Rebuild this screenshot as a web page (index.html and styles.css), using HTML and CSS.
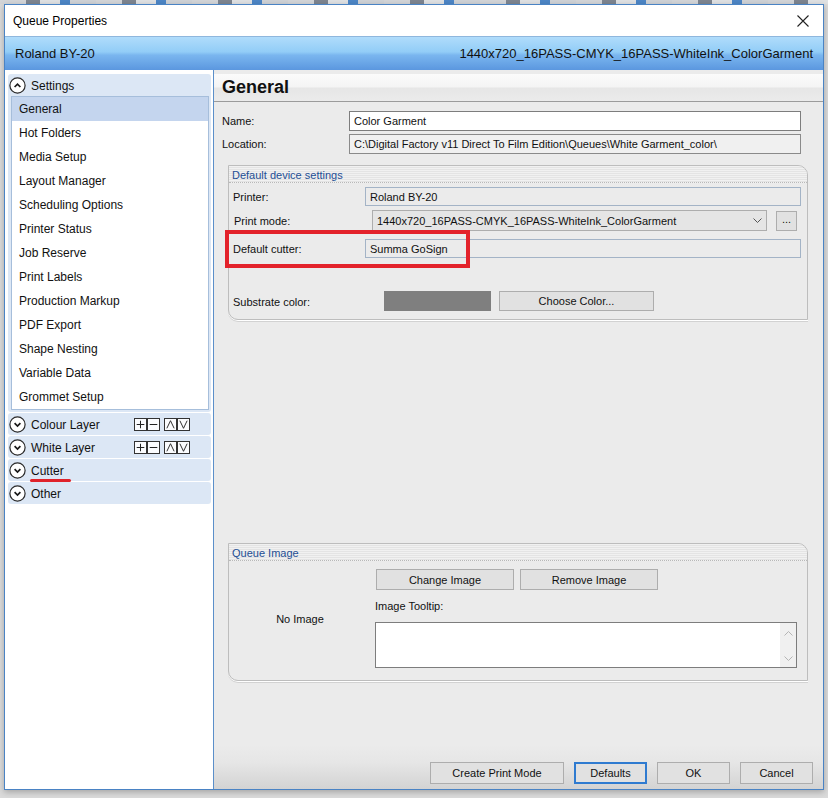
FILE: index.html
```html
<!DOCTYPE html>
<html>
<head>
    <title>Queue Properties</title>
    <link rel="stylesheet" href="styles.css">
</head>
<body>
    <div class="toolbar-strip"></div>
    <div class="dialog">
        <div class="titlebar">
            <span>Queue Properties</span>
            <svg class="close-icon" width="12" height="12" viewBox="0 0 12 12"><path d="M0.5 0.5 L11.5 11.5 M11.5 0.5 L0.5 11.5" stroke="#222" stroke-width="1.1" fill="none"/></svg>
        </div>
        <div class="device-band">
            <span>Roland BY-20</span>
            <span>1440x720_16PASS-CMYK_16PASS-WhiteInk_ColorGarment</span>
        </div>
        <div class="main">
            <div class="sidebar">
                <div class="section">
                    <div class="section-header">
                        <svg class="toggle" width="17" height="17" viewBox="0 0 17 17"><circle cx="8.5" cy="8.5" r="7.6" fill="#fff" stroke="#2a2a2a" stroke-width="1.2"/><path d="M5.6 10 L8.5 7.1 L11.4 10" stroke="#1a1a1a" stroke-width="1.7" fill="none"/></svg>
                        <span class="section-title">Settings</span>
                    </div>
                    <ul class="nav-list">
                        <li class="selected">General</li>
                        <li>Hot Folders</li>
                        <li>Media Setup</li>
                        <li>Layout Manager</li>
                        <li>Scheduling Options</li>
                        <li>Printer Status</li>
                        <li>Job Reserve</li>
                        <li>Print Labels</li>
                        <li>Production Markup</li>
                        <li>PDF Export</li>
                        <li>Shape Nesting</li>
                        <li>Variable Data</li>
                        <li>Grommet Setup</li>
                    </ul>
                </div>
                <div class="section">
                    <div class="section-header">
                        <svg class="toggle" width="17" height="17" viewBox="0 0 17 17"><circle cx="8.5" cy="8.5" r="7.6" fill="#fff" stroke="#2a2a2a" stroke-width="1.2"/><path d="M5.6 7.2 L8.5 10.1 L11.4 7.2" stroke="#1a1a1a" stroke-width="1.7" fill="none"/></svg>
                        <span class="section-title">Colour Layer</span>
                        <span class="layer-tools">
                            <span class="tool-pair">
                                <svg class="tool" width="13" height="13" viewBox="0 0 13 13"><path d="M6.5 2 V11 M2 6.5 H11" stroke="#222" stroke-width="1.2"/></svg>
                                <svg class="tool" width="13" height="13" viewBox="0 0 13 13"><path d="M2 6.5 H11" stroke="#222" stroke-width="1.2"/></svg>
                            </span>
                            <span class="tool-pair">
                                <svg class="tool" width="13" height="13" viewBox="0 0 13 13"><path d="M2.2 11 L6.5 2 L10.8 11" stroke="#222" stroke-width="1.1" fill="none"/></svg>
                                <svg class="tool" width="13" height="13" viewBox="0 0 13 13"><path d="M2.2 2 L6.5 11 L10.8 2" stroke="#222" stroke-width="1.1" fill="none"/></svg>
                            </span>
                        </span>
                    </div>
                </div>
                <div class="section">
                    <div class="section-header">
                        <svg class="toggle" width="17" height="17" viewBox="0 0 17 17"><circle cx="8.5" cy="8.5" r="7.6" fill="#fff" stroke="#2a2a2a" stroke-width="1.2"/><path d="M5.6 7.2 L8.5 10.1 L11.4 7.2" stroke="#1a1a1a" stroke-width="1.7" fill="none"/></svg>
                        <span class="section-title">White Layer</span>
                        <span class="layer-tools">
                            <span class="tool-pair">
                                <svg class="tool" width="13" height="13" viewBox="0 0 13 13"><path d="M6.5 2 V11 M2 6.5 H11" stroke="#222" stroke-width="1.2"/></svg>
                                <svg class="tool" width="13" height="13" viewBox="0 0 13 13"><path d="M2 6.5 H11" stroke="#222" stroke-width="1.2"/></svg>
                            </span>
                            <span class="tool-pair">
                                <svg class="tool" width="13" height="13" viewBox="0 0 13 13"><path d="M2.2 11 L6.5 2 L10.8 11" stroke="#222" stroke-width="1.1" fill="none"/></svg>
                                <svg class="tool" width="13" height="13" viewBox="0 0 13 13"><path d="M2.2 2 L6.5 11 L10.8 2" stroke="#222" stroke-width="1.1" fill="none"/></svg>
                            </span>
                        </span>
                    </div>
                </div>
                <div class="section">
                    <div class="section-header">
                        <svg class="toggle" width="17" height="17" viewBox="0 0 17 17"><circle cx="8.5" cy="8.5" r="7.6" fill="#fff" stroke="#2a2a2a" stroke-width="1.2"/><path d="M5.6 7.2 L8.5 10.1 L11.4 7.2" stroke="#1a1a1a" stroke-width="1.7" fill="none"/></svg>
                        <span class="section-title">Cutter</span>
                    </div>
                </div>
                <div class="section">
                    <div class="section-header">
                        <svg class="toggle" width="17" height="17" viewBox="0 0 17 17"><circle cx="8.5" cy="8.5" r="7.6" fill="#fff" stroke="#2a2a2a" stroke-width="1.2"/><path d="M5.6 7.2 L8.5 10.1 L11.4 7.2" stroke="#1a1a1a" stroke-width="1.7" fill="none"/></svg>
                        <span class="section-title">Other</span>
                    </div>
                </div>
                <span class="mark-underline"></span>
            </div>

            <div class="content">
                <div class="page-header">General</div>
                <div class="page-body">
                    <div class="field-row first">
                        <label>Name:</label>
                        <div class="input">Color Garment</div>
                    </div>
                    <div class="field-row">
                        <label>Location:</label>
                        <div class="input readonly">C:\Digital Factory v11 Direct To Film Edition\Queues\White Garment_color\</div>
                    </div>

                    <div class="group device-group">
                        <div class="group-title">Default device settings</div>
                        <div class="device-body">
                            <div class="device-row">
                                <label>Printer:</label>
                                <div class="device-field">Roland BY-20</div>
                            </div>
                            <div class="device-row mode-row">
                                <label>Print mode:</label>
                                <div class="select">
                                    <span>1440x720_16PASS-CMYK_16PASS-WhiteInk_ColorGarment</span>
                                    <svg width="9" height="5" viewBox="0 0 9 5"><path d="M0.5 0.5 L4.5 4.5 L8.5 0.5" stroke="#555" fill="none"/></svg>
                                </div>
                                <div class="btn dots">...</div>
                            </div>
                            <div class="device-row cutter-row">
                                <label>Default cutter:</label>
                                <div class="device-field">Summa GoSign</div>
                            </div>
                            <div class="device-row substrate-row">
                                <label>Substrate color:</label>
                                <div class="swatch"></div>
                                <div class="btn choose-btn">Choose Color...</div>
                            </div>
                        </div>
                    </div>

                    <div class="group image-group">
                        <div class="group-title">Queue Image</div>
                        <div class="image-body">
                            <div class="no-image">No Image</div>
                            <div class="image-controls">
                                <div class="image-buttons">
                                    <div class="btn image-btn">Change Image</div>
                                    <div class="btn image-btn">Remove Image</div>
                                </div>
                                <div class="tooltip-label">Image Tooltip:</div>
                                <div class="tooltip-box">
                                    <div class="scroll-col">
                                        <svg width="9" height="5" viewBox="0 0 9 5"><path d="M0.5 4.5 L4.5 0.5 L8.5 4.5" stroke="#b5b5b5" fill="none"/></svg>
                                        <svg width="9" height="5" viewBox="0 0 9 5"><path d="M0.5 0.5 L4.5 4.5 L8.5 0.5" stroke="#b5b5b5" fill="none"/></svg>
                                    </div>
                                </div>
                            </div>
                        </div>
                    </div>
                </div>
                <div class="footer">
                    <div class="btn footer-btn wide">Create Print Mode</div>
                    <div class="btn footer-btn focused">Defaults</div>
                    <div class="btn footer-btn">OK</div>
                    <div class="btn footer-btn">Cancel</div>
                </div>
                <span class="annotation-box"></span>
            </div>
        </div>
    </div>
</body>
</html>
```

FILE: styles.css
```css
* { box-sizing: border-box; }
body {
    margin: 0;
    padding: 0 4px 8px;
    background: #dadada;
    font-family: "Liberation Sans", Arial, sans-serif;
    font-size: 11px;
    color: #111;
}
.toolbar-strip {
    height: 4px;
    margin: 0 -4px;
    background: repeating-linear-gradient(90deg, #d3d5d8 0 26px, #7d8590 26px 40px, #dfe1e3 40px 60px, #4d86c6 60px 70px, #cfd2d6 70px 96px);
}

.dialog {
    width: 820px;
    height: 786px;
    border: 1px solid #4a83c4;
    background: #fff;
    display: flex;
    flex-direction: column;
    box-shadow: 0 2px 6px rgba(0,0,0,0.25);
}
.titlebar {
    height: 31px;
    display: flex;
    align-items: center;
    justify-content: space-between;
    padding: 0 14px 0 8px;
    font-size: 12px;
    color: #000;
}
.device-band {
    height: 34px;
    display: flex;
    align-items: center;
    justify-content: space-between;
    padding: 0 10px;
    font-size: 13px;
    color: #111;
    border-top: 1px solid #8fb7dd;
    background: linear-gradient(#b0dcfb 0, #92cdf7 45%, #7ab6ef 55%, #5b97df 100%);
}
.main {
    flex: 1;
    display: flex;
    min-height: 0;
}

/* sidebar */
.sidebar {
    width: 209px;
    background: #fff;
    border-right: 1px solid #5b8fca;
    padding: 4px 2px 0 3px;
    position: relative;
    font-size: 12px;
}
.section {
    background: #dce7f5;
    border-radius: 3px;
    margin-bottom: 1px;
}
.section:first-child { padding-bottom: 2px; }
.section-header {
    height: 22px;
    display: flex;
    align-items: center;
    padding: 1px 0 0 1px;
    gap: 5px;
    color: #111;
}
.toggle { flex: none; }
.section-title { width: 98px; }
.nav-list {
    list-style: none;
    margin: 0 2px 0 3px;
    padding: 0;
    background: #fff;
    border: 1px solid #a6bedb;
}
.nav-list li {
    height: 24px;
    line-height: 25px;
    padding-left: 7px;
    color: #111;
}
.nav-list li.selected { background: #c4d5ee; }
.layer-tools { display: flex; gap: 4px; }
.tool-pair { display: flex; }
.tool {
    display: block;
    border: 1px solid #333;
    background: #fbfcfe;
}
.mark-underline {
    position: absolute;
    left: 25px;
    top: 409px;
    width: 41px;
    height: 3px;
    border-radius: 2px;
    background: #e0232b;
}

/* content */
.content {
    flex: 1;
    display: flex;
    flex-direction: column;
    background: #ebebeb;
    position: relative;
}
.page-header {
    margin-top: 4px;
    height: 28px;
    padding-left: 8px;
    display: flex;
    align-items: center;
    font-size: 18px;
    font-weight: bold;
    color: #111;
    background: linear-gradient(#fbfbfb, #f4f4f4 48%, #e6e6e6 52%, #ebebeb);
    border-bottom: 1px solid #9b9b9b;
}
.page-body {
    display: flex;
    flex-direction: column;
    padding: 0 15px 0 14px;
}
.field-row {
    display: flex;
    align-items: center;
    height: 20px;
    margin: 3px 0 0 -6px;
    padding-right: 7px;
}
.field-row.first { margin-top: 9px; }
.field-row label { width: 127px; }
.input {
    flex: 1;
    height: 20px;
    display: flex;
    align-items: center;
    padding: 0 4px;
    background: #fff;
    border: 1px solid #7d7d7d;
    white-space: nowrap;
}
.input.readonly { background: #f0f0f0; border-color: #8a8a8a; }

.group {
    border: 1px solid #bdbdbd;
    border-radius: 0 10px 0 10px;
    box-shadow: 0 1px 0 #fff, 0 2px 0 #d2d2d2;
}
.device-group { margin-top: 11px; }
.image-group { margin-top: 223px; }
.group-title {
    height: 17px;
    line-height: 18px;
    padding-left: 3px;
    color: #1f4f95;
    border-radius: 0 9px 0 0;
    border-bottom: 1px dotted #b8b8b8;
    background: repeating-linear-gradient(#f1f1f1 0 1px, #e4e4e4 1px 2px);
}
.device-body { padding: 4px 6px 8px 4px; }
.device-row { display: flex; align-items: center; }
.device-row label { width: 132px; }
.device-field {
    flex: 1;
    height: 19px;
    display: flex;
    align-items: center;
    padding-left: 4px;
    background: #ebebeb;
    border: 1px solid #a3b3c6;
}
.mode-row { margin-top: 4px; padding-right: 4px; }
.mode-row label { padding-left: 1px; }
.select {
    flex: 1;
    height: 21px;
    margin-left: 7px;
    display: flex;
    align-items: center;
    justify-content: space-between;
    padding: 0 4px;
    background: #e5e5e5;
    border: 1px solid #adadad;
}
.cutter-row { margin-top: 8px; }
.substrate-row { margin-top: 33px; }
.substrate-row label { width: 151px; padding-top: 1px; }
.swatch {
    width: 107px;
    height: 20px;
    background: #7f7f7f;
}
.btn {
    display: flex;
    align-items: center;
    justify-content: center;
    background: #e1e1e1;
    border: 1px solid #adadad;
    color: #111;
}
.dots { width: 21px; height: 20px; margin-left: 9px; padding-bottom: 3px; }
.choose-btn { width: 155px; height: 20px; margin-left: 8px; }

.image-body {
    display: grid;
    grid-template-columns: 146px 1fr;
    padding: 0 10px 12px 0;
}
.no-image {
    align-self: center;
    text-align: center;
    padding: 8px 4px 0 0;
}
.image-buttons { display: flex; gap: 6px; margin: 8px 0 0 1px; }
.image-btn { width: 138px; height: 21px; }
.tooltip-label { margin-top: 10px; line-height: 12px; }
.tooltip-box {
    margin-top: 10px;
    height: 46px;
    background: #fff;
    border: 1px solid #7d7d7d;
    display: flex;
    justify-content: flex-end;
}
.scroll-col {
    width: 16px;
    background: #f0f0f0;
    display: flex;
    flex-direction: column;
    justify-content: space-between;
    align-items: center;
    padding: 8px 0 6px;
}

.footer {
    margin-top: auto;
    height: 44px;
    display: flex;
    justify-content: flex-end;
    gap: 10px;
    padding: 17px 10px 0 0;
    background: linear-gradient(#ebebeb 0, #e6e6e6 40%, #d3d3d3 100%);
}
.footer-btn { width: 73px; height: 22px; }
.footer-btn.wide { width: 134px; }
.footer-btn.focused { border: 2px solid #2f7bd0; }

.annotation-box {
    position: absolute;
    left: 11px;
    top: 160px;
    width: 245px;
    height: 38px;
    border: 4px solid #e3222b;
}
```
